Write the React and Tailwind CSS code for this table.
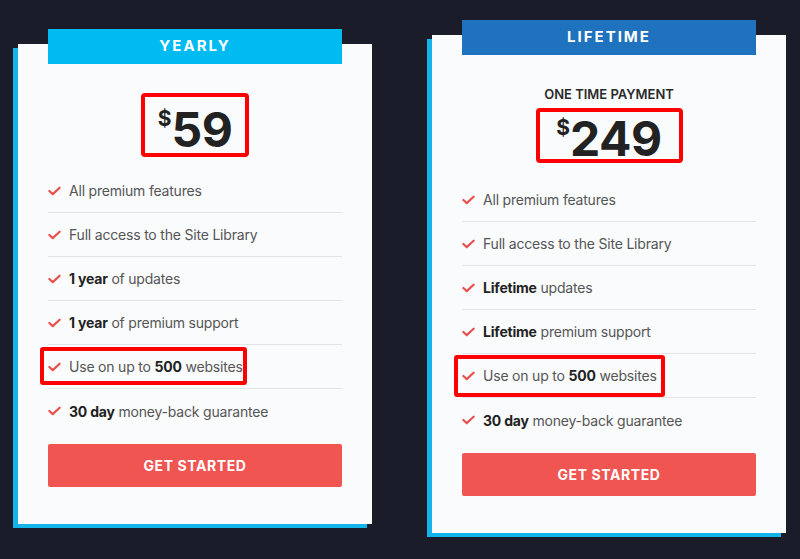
import React from "react";

const font = { fontFamily: "Inter, 'Noto Sans', sans-serif" };

const yearly = [
  { text: "All premium features" },
  { text: "Full access to the Site Library" },
  { bold: "1 year", text: " of updates" },
  { bold: "1 year", text: " of premium support" },
  { pre: "Use on up to ", bold: "500", text: " websites", marked: true },
  { bold: "30 day", text: " money-back guarantee" },
];

const lifetime = [
  { text: "All premium features" },
  { text: "Full access to the Site Library" },
  { bold: "Lifetime", text: " updates" },
  { bold: "Lifetime", text: " premium support" },
  { pre: "Use on up to ", bold: "500", text: " websites", marked: true },
  { bold: "30 day", text: " money-back guarantee" },
];

function Check() {
  return (
    <svg viewBox="0 0 14 10" className="h-[10px] w-[13px] shrink-0" fill="none">
      <path d="M1.5 5l3.6 3.4L12.5 1.5" stroke="#e8524f" strokeWidth="2.4" strokeLinecap="round" strokeLinejoin="round" />
    </svg>
  );
}

function Feature({ item, last, markClass }) {
  return (
    <li className={"relative flex h-[44px] items-center gap-[8px] " + (last ? "" : "border-b border-[#e3e4e8]")}>
      <Check />
      <span className="text-[14px] text-[#555] tracking-[-0.2px]">
        {item.pre}
        {item.bold && <b className="font-bold text-[#222]">{item.bold}</b>}
        {item.text}
      </span>
      {item.marked && (
        <div className={"pointer-events-none absolute rounded-[3px] border-[4px] border-[#ff0000] " + markClass} />
      )}
    </li>
  );
}

function Card({ title, tabColor, subtitle, price, boxClass, items, markClass, listGap, cls, topPad }) {
  return (
    <div className={"relative w-[354px] " + cls}>
      <div
        className={"relative z-10 mx-[30px] flex h-[35px] items-center justify-center text-[15px] font-bold tracking-[2px] text-white " + tabColor}
      >
        {title}
      </div>
      <div className="-mt-[20px] bg-[#fafbfd] px-[30px] pb-[37px] shadow-[-5px_4px_0_#12b4ea]">
        <div className={"flex flex-col items-center " + topPad}>
          {subtitle && (
            <div className="mb-[5px] h-[18px] text-[13px] leading-[18px] font-semibold text-[#2a2a2a]">{subtitle}</div>
          )}
          <div className={"flex items-start justify-center rounded-[4px] border-[4px] border-[#ff0000] " + boxClass}>
            <span className="mt-[2px] text-[21px] font-bold leading-none text-[#222]">$</span>
            <span className="text-[48px] font-bold leading-none tracking-[-0.5px] text-[#222]">{price}</span>
          </div>
        </div>
        <ul className={listGap}>
          {items.map((it, i) => (
            <Feature key={i} item={it} last={i === items.length - 1} markClass={markClass} />
          ))}
        </ul>
        <button className="mt-[11px] flex h-[43px] w-full items-center justify-center rounded-[2px] bg-[#f05552] text-[14px] font-bold tracking-[0.6px] text-white">
          GET STARTED
        </button>
      </div>
    </div>
  );
}

export default function App() {
  return (
    <div className="flex h-[559px] w-[800px] items-start gap-[60px] overflow-hidden bg-[#1b1c2a] pl-[18px]" style={font}>
      <Card
        cls="mt-[29px]"
        topPad="pt-[49px]"
        title="YEARLY"
        tabColor="bg-[#00bbf1]"
        price="59"
        boxClass="w-[108px] h-[64px] pt-[9px]"
        items={yearly}
        listGap="mt-[12px]"
        markClass="-left-[8px] top-[2px] h-[38px] w-[207px]"
      />
      <Card
        cls="mt-[20px]"
        topPad="pt-[50px]"
        title="LIFETIME"
        tabColor="bg-[#1f72bd]"
        subtitle="ONE TIME PAYMENT"
        price="249"
        boxClass="w-[147px] h-[55px] pt-[3px]"
        items={lifetime}
        listGap="mt-[15px]"
        markClass="-left-[8px] top-[1px] h-[42px] w-[211px]"
      />
    </div>
  );
}
